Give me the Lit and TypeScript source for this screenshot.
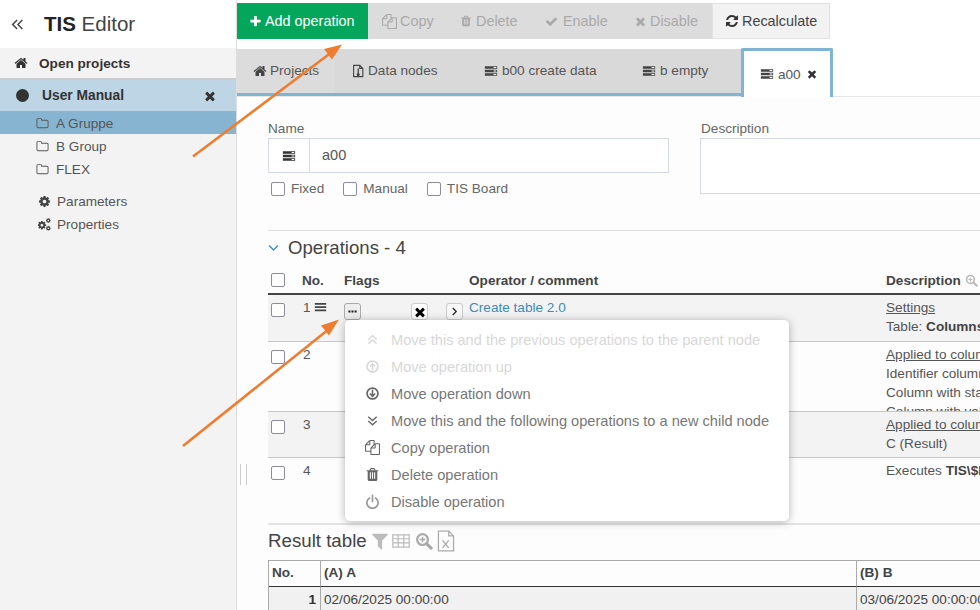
import { LitElement, html, css, svg } from "lit";
import { customElement } from "lit/decorators.js";

const fa = (d: string, cls = "") => html`<svg class="ic ${cls}" viewBox="0 0 1792 1792"><path fill="currentColor" d=${d}></path></svg>`;
const HOME = "M1472 992v480q0 26-19 45t-45 19h-384v-384h-256v384h-384q-26 0-45-19t-19-45v-480q0-1 .5-3t.5-3l575-474 575 474q1 2 1 6zm223-69l-62 74q-8 9-21 11h-3q-13 0-21-7l-692-577-692 577q-12 8-24 7-13-2-21-11l-62-74q-8-10-7-23.500t11-21.500l719-599q32-26 76-26t76 26l244 204v-195q0-14 9-23t23-9h192q14 0 23 9t9 23v408l219 182q10 8 11 21.500t-7 23.500z";
const TIMES = "M1490 1322q0 40-28 68l-136 136q-28 28-68 28t-68-28l-294-294-294 294q-28 28-68 28t-68-28l-136-136q-28-28-28-68t28-68l294-294-294-294q-28-28-28-68t28-68l136-136q28-28 68-28t68 28l294 294 294-294q28-28 68-28t68 28l136 136q28 28 28 68t-28 68l-294 294 294 294q28 28 28 68z";
const PLUS = "M1600 736v192q0 40-28 68t-68 28h-416v416q0 40-28 68t-68 28h-192q-40 0-68-28t-28-68v-416h-416q-40 0-68-28t-28-68v-192q0-40 28-68t68-28h416v-416q0-40 28-68t68-28h192q40 0 68 28t28 68v416h416q40 0 68 28t28 68z";
const CHECK = "M1671 566q0 40-28 68l-724 724-136 136q-28 28-68 28t-68-28l-136-136-362-362q-28-28-28-68t28-68l136-136q28-28 68-28t68 28l294 295 656-657q28-28 68-28t68 28l136 136q28 28 28 68z";
const REFRESH = "M1639 1056q0 5-1 7-64 268-268 434.500t-478 166.500q-146 0-282.500-55t-243.500-157l-129 129q-19 19-45 19t-45-19-19-45v-448q0-26 19-45t45-19h448q26 0 45 19t19 45-19 45l-137 137q71 66 161 102t187 36q134 0 250-65t186-179q11-17 53-117 8-23 30-23h192q13 0 22.500 9.500t9.500 22.500zm25-800v448q0 26-19 45t-45 19h-448q-26 0-45-19t-19-45 19-45l138-138q-148-137-349-137-134 0-250 65t-186 179q-11 17-53 117-8 23-30 23h-199q-13 0-22.500-9.500t-9.500-22.500v-7q65-268 270-434.500t480-166.500q146 0 284 55.500t245 156.500l130-129q19-19 45-19t45 19 19 45z";
const TRASH = "M704 1376v-704q0-14-9-23t-23-9h-64q-14 0-23 9t-9 23v704q0 14 9 23t23 9h64q14 0 23-9t9-23zm256 0v-704q0-14-9-23t-23-9h-64q-14 0-23 9t-9 23v704q0 14 9 23t23 9h64q14 0 23-9t9-23zm256 0v-704q0-14-9-23t-23-9h-64q-14 0-23 9t-9 23v704q0 14 9 23t23 9h64q14 0 23-9t9-23zm-544-992h448l-48-117q-7-9-17-11h-317q-10 2-17 11zm928 32v64q0 14-9 23t-23 9h-96v948q0 83-47 143.500t-113 60.500h-832q-66 0-113-58.500t-47-141.500v-952h-96q-14 0-23-9t-9-23v-64q0-14 9-23t23-9h309l70-167q15-37 54-63t79-26h320q40 0 79 26t54 63l70 167h309q14 0 23 9t9 23z";
const COG = "M1152 896q0-106-75-181t-181-75-181 75-75 181 75 181 181 75 181-75 75-181zm512-109v222q0 12-8 23t-20 13l-185 28q-19 54-39 91 35 50 107 138 10 12 10 25t-9 23q-27 37-99 108t-94 71q-12 0-26-9l-138-108q-44 23-91 38-16 136-29 186-7 28-36 28h-222q-14 0-24.500-8.500t-11.500-21.500l-28-184q-49-16-90-37l-141 107q-10 9-25 9-14 0-25-11-126-114-165-168-7-10-7-23 0-12 8-23 15-21 51-66.500t54-70.500q-27-50-41-99l-183-27q-13-2-21-12.500t-8-23.500v-222q0-12 8-23t19-13l186-28q14-46 39-92-40-57-107-138-10-12-10-24 0-10 9-23 26-36 98.500-107.500t94.500-71.500q13 0 26 10l138 107q44-23 91-38 16-136 29-186 7-28 36-28h222q14 0 24.500 8.500t11.500 21.500l28 184q49 16 90 37l142-107q9-9 24-9 13 0 25 10 129 119 165 170 7 8 7 22 0 12-8 23-15 21-51 66.500t-54 70.500q26 50 41 98l183 28q13 2 21 12.500t8 23.500z";
const FILTER = "M1595 295q17 41-14 70l-493 493v742q0 42-39 59-13 5-25 5-27 0-45-19l-256-256q-19-19-19-45v-486l-493-493q-31-29-14-70 17-39 59-39h1280q42 0 59 39z";
const FILES = "M1696 384q40 0 68 28t28 68v1216q0 40-28 68t-68 28h-960q-40 0-68-28t-28-68v-288h-544q-40 0-68-28t-28-68v-672q0-40 20-88t48-76l408-408q28-28 76-48t88-20h416q40 0 68 28t28 68v328q68-40 128-40h416zm-544 213l-299 299h299v-299zm-640-384l-299 299h299v-299zm196 647l316-316v-416h-384v416q0 40-28 68t-68 28h-416v640h512v-256q0-40 20-88t48-76zm956 804v-1152h-384v416q0 40-28 68t-68 28h-416v640h896z";
const FOLDER = "M1600 1312v-704q0-40-28-68t-68-28h-704q-40 0-68-28t-28-68v-64q0-40-28-68t-68-28h-320q-40 0-68 28t-28 68v960q0 40 28 68t68 28h1216q40 0 68-28t28-68zm128-704v704q0 92-66 158t-158 66h-1216q-92 0-158-66t-66-158v-960q0-92 66-158t158-66h320q92 0 158 66t66 158v32h672q92 0 158 66t66 158z";

const ico = (body: unknown, cls = "") => html`<svg class="ic ${cls}" viewBox="0 0 16 16">${body}</svg>`;
const folder = () => fa(FOLDER);
const server = () => ico(svg`<path fill="currentColor" d="M1 2.500h14v3H1zM1 6.500h14v3H1zM1 10.500h14v3H1z"></path><path fill="#fff" d="M11 3.500h3v1h-3zM11 7.500h3v1h-3zM11 11.500h3v1h-3z"></path>`);
const files = () => fa(FILES);
const dataDoc = () => ico(svg`<path fill="none" stroke="currentColor" stroke-width="1.300" d="M3 1.500h7l3.500 3.500v9.500H3zM10 1.500V5h3.500"></path><path fill="currentColor" d="M7.500 5h1.500v5.500a1.800 1.800 0 1 1-1.500 0z"></path>`);
const search = (cls = "") => ico(svg`<circle cx="6.700" cy="6.700" r="4.800" fill="none" stroke="currentColor" stroke-width="2"></circle><path stroke="currentColor" stroke-width="2.800" stroke-linecap="round" d="M10.500 10.500l3.800 3.800"></path><path stroke="currentColor" stroke-width="1.300" d="M4.200 6.700h5M6.700 4.200v5"></path>`, cls);
const dbl = (up: boolean) => ico(svg`<path fill="none" stroke="currentColor" stroke-width="1.500" d=${up ? "M3.500 8L8 4l4.500 4M3.500 12.500L8 8.500l4.500 4" : "M3.500 4L8 8l4.500-4M3.500 8.500L8 12.500l4.500-4"}></path>`);
const circ = (up: boolean) => ico(svg`<circle cx="8" cy="8" r="5.800" fill="none" stroke="currentColor" stroke-width="1.800"></circle><path fill="none" stroke="currentColor" stroke-width="1.600" d=${up ? "M8 12V5.500M5.200 8L8 5l2.800 3" : "M8 4v6.500M5.200 8L8 11l2.800-3"}></path>`);
const power = () => ico(svg`<path fill="none" stroke="currentColor" stroke-width="1.800" stroke-linecap="round" d="M4.800 4.200a6 6 0 1 0 6.400 0M8 1.500v6.500"></path>`);
const tableIc = (cls = "") => ico(svg`<path fill="none" stroke="currentColor" stroke-width="1.100" d="M.7 2.500h14.600v11H.7zM.7 6h14.600M.7 9.700h14.600M5.500 2.500v11M10.500 2.500v11"></path>`, cls);
const xls = (cls = "") => ico(svg`<path fill="none" stroke="currentColor" stroke-width=".9" d="M2.500.8h7.500l3.500 3.500v10.900h-11zM10 .8v3.500h3.500"></path><path fill="none" stroke="currentColor" stroke-width="1" d="M5.500 7.500l4.500 5.500M10 7.500l-4.500 5.500"></path>`, cls);
const cogs = () => ico(svg`<path fill="currentColor" transform="translate(-1.300 2.700) scale(.0068)" d=${COG}></path><path fill="currentColor" transform="translate(9.300 -.3) scale(.0038)" d=${COG}></path><path fill="currentColor" transform="translate(9.300 9.200) scale(.0038)" d=${COG}></path>`);

@customElement("app-root")
export class AppRoot extends LitElement {
  static styles = css`
    :host { display: block; width: 980px; height: 610px; position: relative; overflow: hidden; background: #fff;
      font-family: "Liberation Sans", Arial, sans-serif; font-size: 13.6px; color: #555; }
    * { box-sizing: border-box; }
    .ic { display: block; width: 14px; height: 14px; flex: none; }
    .shell { display: flex; height: 610px; }

    .side { width: 237px; flex: none; display: flex; flex-direction: column; border-right: 1px solid #ddd; }
    .brand { height: 48px; flex: none; display: flex; align-items: center; padding-left: 11px; font-size: 20.5px; color: #444; gap: 20px; background: #fff; }
    .brand .ic { width: 13px; height: 15px; color: #444; }
    .brand b { color: #222; }
    .nav { flex: 1; background: #f3f3f3; }
    .open { height: 32px; display: flex; align-items: center; padding-left: 14px; font-weight: bold; color: #333; border-bottom: 2px solid #ccc; gap: 11px; }
    .proj { height: 31px; display: flex; align-items: center; background: #bdd5e4; font-weight: bold; color: #333; padding-left: 16px; gap: 13px; font-size: 13.8px; }
    .proj .dot { width: 13px; height: 13px; border-radius: 50%; background: #333; flex: none; }
    .proj span { flex: 1; }
    .proj .ic { width: 14px; height: 14px; margin-right: 19px; color: #333; }
    .tree { height: 23px; display: flex; align-items: center; padding: 1px 0 0 36px; gap: 7px; }
    .tree .ic { width: 13px; height: 13px; color: #555; }
    .tree.sel { background: #87b5d1; }
    .gap { height: 9px; }
    .set { height: 23px; display: flex; align-items: center; padding: 1px 0 0 38px; gap: 6px; color: #555; }
    .set .ic { width: 13px; height: 13px; color: #444; }

    .main { flex: 1; min-width: 0; overflow: hidden; display: flex; flex-direction: column; background: #fdfdfd; }
    .toolbar { height: 48px; flex: none; padding-top: 3px; display: flex; background: #fff; margin-left: -1px; align-items: flex-start; font-size: 14.4px; }
    .btn { height: 36px; display: flex; align-items: center; gap: 4px; background: #dcdcdc; color: #a9a9a9; padding: 0 13px; white-space: nowrap; flex: none; }
    .btn .ic { width: 13px; height: 13px; }
    .btn.add { width: 132px; background: #04a65b; color: #fff; padding: 0 0 0 13px; border-radius: 2px 0 0 2px; gap: 3px; }
    .btn.add .ic { width: 13px; height: 13px; }
    .btn.copy { width: 78px; padding-left: 14px; gap: 3px; }
    .btn.copy .ic { width: 15px; height: 15px; }
    .btn.del { width: 86px; padding-left: 14px; }
    .btn.del .ic { width: 12px; height: 12px; }
    .btn.en { width: 89px; padding-left: 13px; gap: 5px; }
    .btn.dis { width: 91px; padding-left: 13px; gap: 3px; }
    .btn.rec { width: 118px; background: #f2f2f2; color: #444; border: 1px solid #e2e2e2; padding-left: 12px; gap: 3px; }
    .btn.rec .ic { width: 14px; height: 14px; color: #333; }

    .tabs { height: 49px; flex: none; display: flex; align-items: flex-end; background: #fff; border-bottom: 1px solid #e6e6e6; }
    .tab { height: 47px; display: flex; align-items: center; background: #d9d9d9; border-bottom: 3px solid #7db5d3; color: #555; gap: 4px; padding-bottom: 1px; flex: none; }
    .tab .ic { width: 14px; height: 14px; color: #444; }
    .t1 { width: 98px; padding-left: 16px; background: #dcdcdc; gap: 3px; }
    .t2 { width: 132px; padding-left: 16px; gap: 3px; }
    .t3 { width: 159px; padding-left: 17px; }
    .t4 { width: 115px; padding-left: 16px; }
    .tab.act { width: 92px; height: 49px; background: #fff; border: 3px solid #7db5d3; border-bottom: 0; padding-left: 16px; border-radius: 2px 2px 0 0; padding-bottom: 0; margin-bottom: -1px; }
    .tab.act .x { width: 12px; height: 12px; margin-left: 1px; color: #333; }

    .content { padding: 25px 0 0 31px; width: 1000px; flex: none; }
    .form { display: flex; gap: 32px; height: 108px; }
    .fname { width: 401px; flex: none; }
    .fdesc { width: 400px; flex: none; }
    label.l { display: block; height: 16px; line-height: 13px; color: #666; }
    .input { height: 35px; border: 1px solid #d5d9e5; display: flex; background: #fff; }
    .addon { width: 41px; border-right: 1px solid #d5d9e5; display: flex; align-items: center; justify-content: center; color: #333; }
    .val { padding-left: 12px; line-height: 33px; font-size: 14.5px; color: #555; }
    .ta { height: 56px; border: 1px solid #d5d9e5; background: #fff; margin-left: -1px; }
    .checks { display: flex; margin-top: 8px; padding-left: 3px; height: 15px; align-items: center; }
    .chk { display: flex; align-items: center; gap: 6px; color: #666; }
    .chk + .chk { margin-left: 19px; }
    .box { width: 14px; height: 14px; border: 1px solid #8c8c9c; border-radius: 2px; background: #fff; flex: none; display: block; }

    .sec { border-top: 1px solid #ddd; height: 36px; display: flex; align-items: center; gap: 9px; font-size: 18.6px; color: #444; padding-bottom: 2px; }
    .sec .ic { width: 11px; height: 11px; color: #3d8fc0; }
    .hrow, .row { display: grid; grid-template-columns: 34px 42px 125px 417px 300px; }
    .hrow { height: 29px; border-bottom: 2px solid #444; font-weight: bold; color: #444; align-items: center; background: #fdfdfd; padding-top: 2px; }
    .hrow .box { margin: -2px 0 0 3px; }
    .desc-h { display: flex; align-items: center; gap: 4px; }
    .desc-h .ic { width: 13px; height: 13px; color: #bbb; }
    .row { border-bottom: 1px solid #c8c8c8; color: #555; overflow: hidden; }
    .row.odd { background: #f3f3f3; }
    .row > div { padding-top: 5px; }
    .r1 { height: 47px; } .r2 { height: 70px; } .r3 { height: 46px; } .r4 { height: 67px; border-bottom: 2px solid #e4e4e4; }
    .row .box { margin: 3px 0 0 3px; }
    .no { display: flex; gap: 3px; align-items: flex-start; line-height: 15px; padding-left: 1px; color: #555; }
    .no .ic { width: 13px; height: 14px; color: #444; }
    .flags { display: flex; padding-top: 8px !important; }
    .mini { width: 17px; height: 17px; border: 1px solid #ccc; border-radius: 3px; background: #f4f4f4; display: flex; align-items: center; justify-content: center; color: #222; flex: none; }
    .mini.x { background: #fff; margin-left: 50px; color: #000; }
    .mini.x .ic { width: 14px; height: 14px; }
    .mini.more { background: #eee; border-color: #aaa; }
    .mini .ic { width: 11px; height: 11px; }
    .mini.go { margin-left: 18px; background: #f7f7f7; }
    .link { color: #3d8bbd; line-height: 15px; }
    .dtext { line-height: 19px; white-space: nowrap; margin-top: -2px; }
    .dtext u { display: block; }
    .dtext div { color: #555; }
    .dtext b { color: #444; }

    .rhead { height: 35px; display: flex; align-items: center; font-size: 18.7px; color: #444; padding-bottom: 3px; }
    .rhead .ic { color: #bcbcbc; flex: none; }
    .rhead .f { width: 20px; height: 20px; margin-left: 3px; }
    .rhead .tb { width: 18px; height: 18px; margin-left: 2px; }
    .rhead .s { width: 18px; height: 18px; margin-left: 5px; color: #aaa; }
    .rhead .xl { width: 22px; height: 22px; margin-left: 2px; color: #aaa; }
    .res { display: grid; grid-template-columns: 52px 536px 300px; border-top: 1px solid #aaa; border-left: 1px solid #aaa; }
    .res > div { padding-left: 3px; }
    .th { height: 26px; border-right: 1px solid #aaa; border-bottom: 1px solid #333; font-weight: bold; color: #444; line-height: 24px; }
    .td { height: 25px; border-right: 1px solid #aaa; line-height: 25px; background: #f1f1f1; color: #444; white-space: nowrap; }
    .res .n { text-align: right; padding-right: 4px; font-weight: bold; color: #333; }

    .menu { position: absolute; left: 345px; top: 320px; width: 444px; height: 201px; background: #fff; border-radius: 5px;
      box-shadow: 0 1px 8px rgba(0,0,0,.3); padding: 6px 0; font-size: 14.6px; }
    .mi { height: 27px; display: flex; align-items: center; padding-left: 20px; gap: 11px; color: #777; white-space: nowrap; }
    .mi .ic { width: 15px; height: 15px; color: #666; }
    .mi.off, .mi.off .ic { color: #d8d8d8; }
    .mi.gr .ic { color: #999; }
    .split { position: absolute; left: 240px; top: 464px; width: 7px; height: 21px; border-left: 1px solid #ccc; border-right: 1px solid #ccc; }
    .arrows { position: absolute; left: 0; top: 0; width: 980px; height: 610px; pointer-events: none; }
  `;

  render() {
    return html`
      <div class="shell">
        <aside class="side">
          <div class="brand">
            ${ico(svg`<path fill="none" stroke="currentColor" stroke-width="1.800" d="M7.500 2.500L2 8l5.500 5.500M14 2.500L8.500 8l5.500 5.500"></path>`)}
            <span><b>TIS</b> Editor</span>
          </div>
          <nav class="nav">
            <div class="open">${fa(HOME)}<span>Open projects</span></div>
            <div class="proj"><i class="dot"></i><span>User Manual</span>${fa(TIMES)}</div>
            <div class="tree sel">${folder()}<span>A Gruppe</span></div>
            <div class="tree">${folder()}<span>B Group</span></div>
            <div class="tree">${folder()}<span>FLEX</span></div>
            <div class="gap"></div>
            <div class="set">${fa(COG)}<span>Parameters</span></div>
            <div class="set">${cogs()}<span>Properties</span></div>
          </nav>
        </aside>
        <main class="main">
          <div class="toolbar">
            <div class="btn add">${fa(PLUS)}<span>Add operation</span></div>
            <div class="btn copy">${files()}<span>Copy</span></div>
            <div class="btn del">${fa(TRASH)}<span>Delete</span></div>
            <div class="btn en">${fa(CHECK)}<span>Enable</span></div>
            <div class="btn dis">${fa(TIMES)}<span>Disable</span></div>
            <div class="btn rec">${fa(REFRESH)}<span>Recalculate</span></div>
          </div>
          <div class="tabs">
            <div class="tab t1">${fa(HOME)}<span>Projects</span></div>
            <div class="tab t2">${dataDoc()}<span>Data nodes</span></div>
            <div class="tab t3">${server()}<span>b00 create data</span></div>
            <div class="tab t4">${server()}<span>b empty</span></div>
            <div class="tab act">${server()}<span>a00</span>${fa(TIMES, "x")}</div>
          </div>
          <div class="content">
            <div class="form">
              <div class="fname">
                <label class="l">Name</label>
                <div class="input"><div class="addon">${server()}</div><div class="val">a00</div></div>
                <div class="checks">
                  <div class="chk"><i class="box"></i>Fixed</div>
                  <div class="chk"><i class="box"></i>Manual</div>
                  <div class="chk"><i class="box"></i>TIS Board</div>
                </div>
              </div>
              <div class="fdesc">
                <label class="l">Description</label>
                <div class="ta"></div>
              </div>
            </div>
            <div class="sec">
              ${ico(svg`<path fill="none" stroke="currentColor" stroke-width="2" d="M1.500 5L8 11.500 14.500 5"></path>`)}
              <span>Operations - 4</span>
            </div>
            <div class="hrow">
              <div><i class="box"></i></div><div>No.</div><div>Flags</div><div>Operator / comment</div>
              <div class="desc-h">Description ${search()}</div>
            </div>
            <div class="row odd r1">
              <div><i class="box"></i></div>
              <div class="no">1 ${ico(svg`<path fill="currentColor" d="M1 3h14v2.200H1zM1 7h14v2.200H1zM1 11h14v2.200H1z"></path>`)}</div>
              <div class="flags">
                <div class="mini more">${ico(svg`<path fill="currentColor" d="M2 6.500h3v3H2zM6.500 6.500h3v3h-3zM11 6.500h3v3h-3z"></path>`)}</div>
                <div class="mini x">${fa(TIMES)}</div>
                <div class="mini go">${ico(svg`<path fill="none" stroke="currentColor" stroke-width="1.800" d="M5.500 3l5 5-5 5"></path>`)}</div>
              </div>
              <div class="link">Create table 2.0</div>
              <div class="dtext"><u>Settings</u><div>Table: <b>Columns</b></div></div>
            </div>
            <div class="row r2">
              <div><i class="box"></i></div><div class="no">2</div><div></div><div></div>
              <div class="dtext"><u>Applied to columns</u><div>Identifier column</div><div>Column with status</div><div>Column with values</div></div>
            </div>
            <div class="row odd r3">
              <div><i class="box"></i></div><div class="no">3</div><div></div><div></div>
              <div class="dtext"><u>Applied to columns</u><div>C (Result)</div></div>
            </div>
            <div class="row r4">
              <div><i class="box"></i></div><div class="no">4</div><div></div><div></div>
              <div class="dtext"><div>Executes <b>TIS\\$Flex</b></div></div>
            </div>
            <div class="rhead">
              <span>Result table</span>
              ${fa(FILTER, "f")}${tableIc("tb")}${search("s")}${xls("xl")}
            </div>
            <div class="res">
              <div class="th">No.</div><div class="th">(A) A</div><div class="th">(B) B</div>
              <div class="td n">1</div><div class="td">02/06/2025 00:00:00</div><div class="td">03/06/2025 00:00:00</div>
            </div>
          </div>
        </main>
      </div>

      <div class="split"></div>

      <div class="menu">
        <div class="mi off">${dbl(true)}<span>Move this and the previous operations to the parent node</span></div>
        <div class="mi off">${circ(true)}<span>Move operation up</span></div>
        <div class="mi">${circ(false)}<span>Move operation down</span></div>
        <div class="mi">${dbl(false)}<span>Move this and the following operations to a new child node</span></div>
        <div class="mi">${files()}<span>Copy operation</span></div>
        <div class="mi">${fa(TRASH)}<span>Delete operation</span></div>
        <div class="mi gr">${power()}<span>Disable operation</span></div>
      </div>

      <svg class="arrows" viewBox="0 0 980 610">
        <path stroke="#ed7d31" stroke-width="2.600" fill="none" d="M193 156.500L330 53.500"></path>
        <path fill="#ed7d31" d="M342 44.500L324 49l8 10.500z"></path>
        <path stroke="#ed7d31" stroke-width="2.600" fill="none" d="M183 446L329 329"></path>
        <path fill="#ed7d31" d="M339 319.500L321 325.500l8 10z"></path>
      </svg>
    `;
  }
}
